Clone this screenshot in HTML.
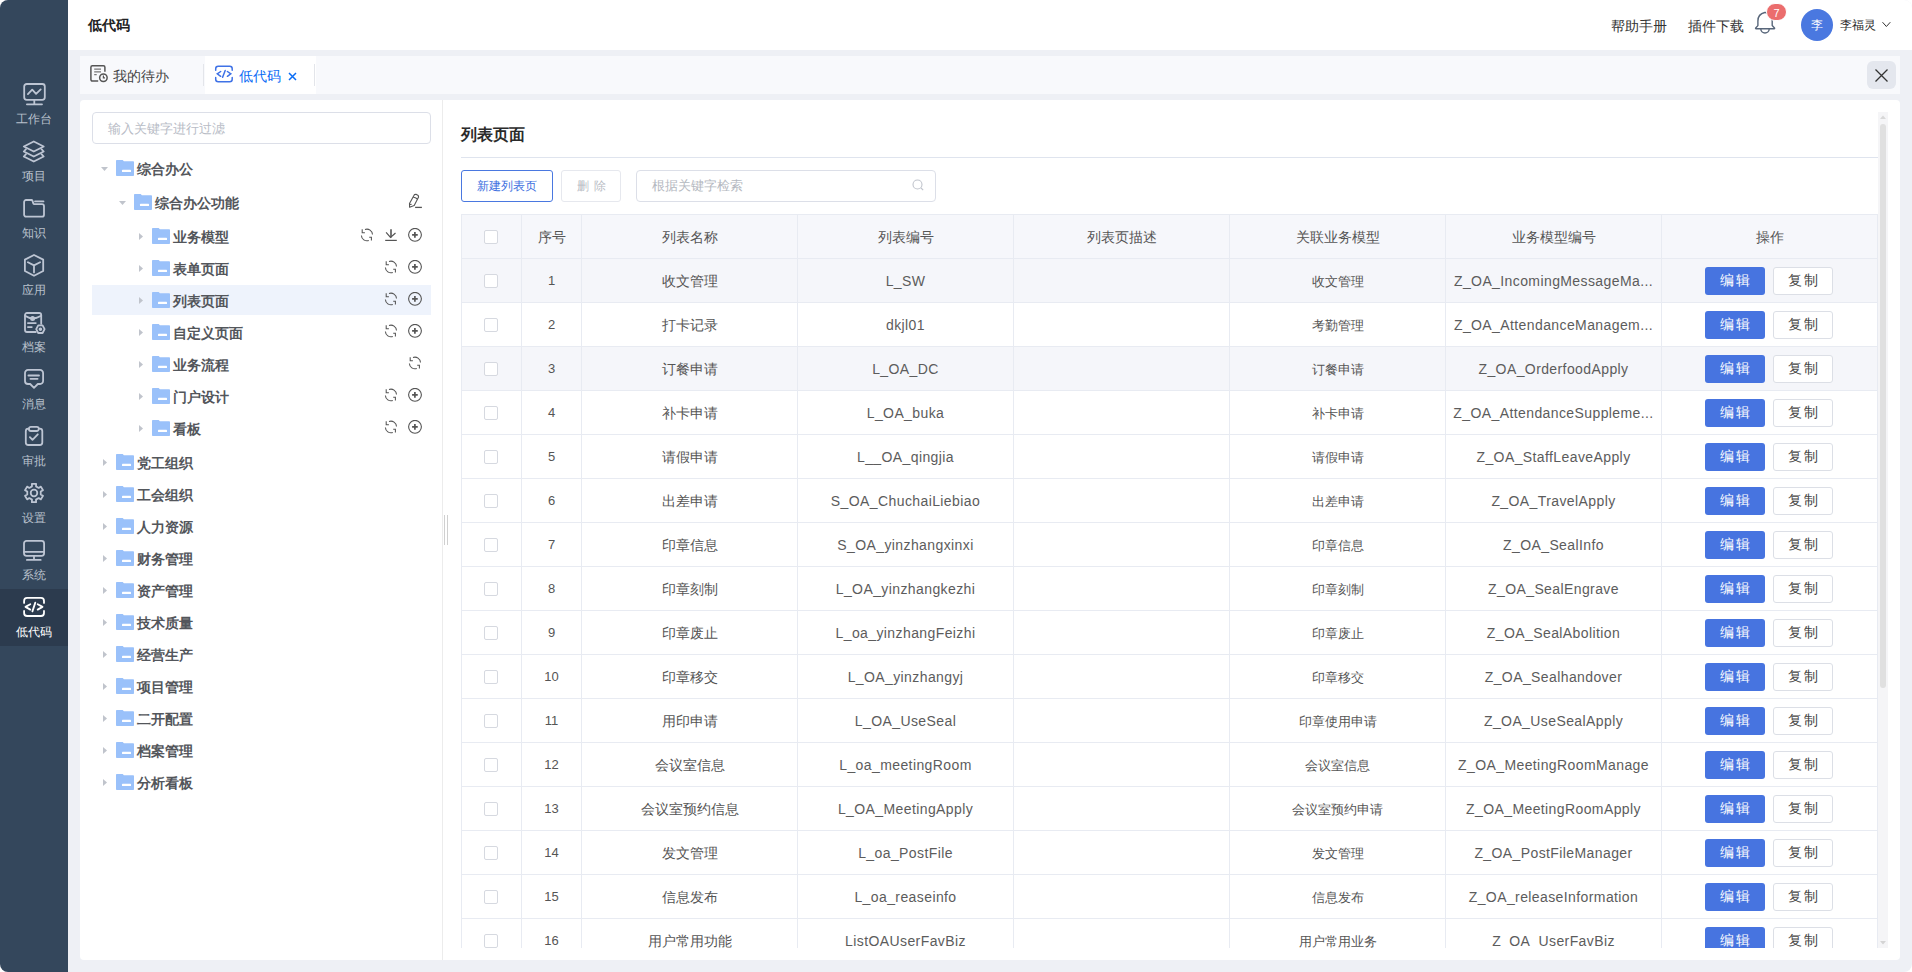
<!DOCTYPE html>
<html><head><meta charset="utf-8">
<style>
*{box-sizing:border-box;margin:0;padding:0}
html,body{width:1912px;height:972px;overflow:hidden;background:#fff;font-family:"Liberation Sans",sans-serif;color:#333}
.abs{position:absolute}
#win{position:absolute;left:0;top:0;width:1912px;height:972px;background:#eef0f5;border-radius:8px;overflow:hidden}
#side{position:absolute;left:0;top:0;width:68px;height:972px;background:#34475c}
.si{position:absolute;left:0;width:68px;height:57px;text-align:center;color:#b9c1cc;font-size:12px}
.si svg{position:absolute;left:22px;top:7px;width:24px;height:24px}
.si span{position:absolute;left:0;width:68px;top:36px;line-height:14px;text-align:center}
.si.act{background:#2c3b4e;color:#fff}
#hdr{position:absolute;left:68px;top:0;width:1844px;height:50px;background:#fff}
.tt{position:absolute;white-space:nowrap;line-height:1}
#tabs{position:absolute;left:80px;top:56px;width:1820px;height:38px;background:#f8f9fc}
#lp{position:absolute;left:80px;top:100px;width:363px;height:860px;background:#fff;border-radius:4px 0 0 4px}
#rp{position:absolute;left:443px;top:100px;width:1457px;height:860px;background:#fff;border-radius:0 4px 4px 0}
#tw{position:absolute;left:461px;top:214px;width:1417px;height:734px;overflow:hidden}
table{border-collapse:collapse;table-layout:fixed;width:1417px}
td,th{border:1px solid #e8ebf2;height:44px;text-align:center;font-weight:normal;font-size:14px;color:#555;white-space:nowrap;overflow:hidden;padding:0}
th{padding-top:2px}
td.zh{padding-top:2px}
td.la{letter-spacing:0.4px;color:#5c5c5c}
td.sm{font-size:12.5px;padding-top:3px}
th .cb{top:-2px}
th{background:#f6f7fb;color:#555}
tr.g td{background:#f5f6fa}
.cb{display:inline-block;position:relative;left:-1px;top:-1px;width:14px;height:14px;border:1px solid #d6d9e0;border-radius:2px;background:#fff;vertical-align:middle}
.be{display:inline-block;margin-left:-1px;width:60px;height:28px;line-height:28px;background:#4774e0;color:#fff;border-radius:3px;font-size:13.5px;letter-spacing:2.5px;text-indent:2.5px;vertical-align:middle}
.bc{display:inline-block;width:60px;height:28px;line-height:26px;background:#fff;border:1px solid #dcdfe6;color:#444;border-radius:3px;font-size:13.5px;letter-spacing:2.5px;text-indent:2.5px;vertical-align:middle;margin-left:8px}
.tn{position:absolute;height:32px;white-space:nowrap}
.tn .ct{position:absolute;top:0}
.tn .txt{position:absolute;font-size:14px;font-weight:bold;color:#4b4b4b;line-height:16px}
</style></head><body><div id="win">

<div id="side">
<div class="si" style="top:76px"><svg viewBox="0 0 24 24" fill="none" stroke="#bdc5d3" stroke-width="1.8" stroke-linecap="round" stroke-linejoin="round" style="color:#bdc5d3"><rect x="2.2" y="1" width="20.6" height="15.8" rx="2.5"/><path d="M5.9 11.1L10.2 6.6l3.9 4.2 4.6-4.4M12.3 17v4M4.9 21.3h15.1"/></svg><span>工作台</span></div>
<div class="si" style="top:133px"><svg viewBox="0 0 24 24" fill="none" stroke="#bdc5d3" stroke-width="1.8" stroke-linecap="round" stroke-linejoin="round" style="color:#bdc5d3"><path d="M11.8 1.5L21.7 6.5 11.8 11.5 1.8 6.5z"/><path d="M4 9.2L1.8 11.5 11.8 16.5 21.7 11.5 19.5 9.2"/><path d="M4 14.2L1.8 16.5 11.8 21.5 21.7 16.5 19.5 14.2"/></svg><span>项目</span></div>
<div class="si" style="top:190px"><svg viewBox="0 0 24 24" fill="none" stroke="#bdc5d3" stroke-width="1.8" stroke-linecap="round" stroke-linejoin="round" style="color:#bdc5d3"><path d="M2.1 5a2 2 0 0 1 2-2h5.4a1 1 0 0 1 .9.6l1 3a1 1 0 0 0 .9.6H20a2 2 0 0 1 2 2v8.5a2 2 0 0 1-2 2H4.1a2 2 0 0 1-2-2z"/><path d="M13 4.4h8.5"/></svg><span>知识</span></div>
<div class="si" style="top:247px"><svg viewBox="0 0 24 24" fill="none" stroke="#bdc5d3" stroke-width="1.8" stroke-linecap="round" stroke-linejoin="round" style="color:#bdc5d3"><path d="M12 1L21.2 5.6v11.4L12 21.8 2.9 17V5.6z"/><path d="M5.9 8.3L12 11.4l6.1-3.1M12 11.4v7"/></svg><span>应用</span></div>
<div class="si" style="top:304px"><svg viewBox="0 0 24 24" fill="none" stroke="#bdc5d3" stroke-width="1.8" stroke-linecap="round" stroke-linejoin="round" style="color:#bdc5d3"><path d="M3 13V4a2 2 0 0 1 2-2h12.2a2 2 0 0 1 2 2v8.8M3 13v6a2 2 0 0 0 2 2h8.8"/><path d="M3 4.8Q10.6 10 19.2 4.8"/><circle cx="10.6" cy="7.4" r="1.6" fill="currentColor"/><path d="M5.9 12.1h7.9M5.9 16.1h3.9"/><path d="M14.2 18.2l2-3.8h4.4l2 3.8-2 3.8h-4.4z"/><circle cx="18.4" cy="18.2" r="0.9" fill="currentColor"/></svg><span>档案</span></div>
<div class="si" style="top:361px"><svg viewBox="0 0 24 24" fill="none" stroke="#bdc5d3" stroke-width="1.8" stroke-linecap="round" stroke-linejoin="round" style="color:#bdc5d3"><path d="M6 1.9h12.1a3 3 0 0 1 3 3V13a3 3 0 0 1-3 3h-2.3L12 19.8 8.2 16H6a3 3 0 0 1-3-3V4.9a3 3 0 0 1 3-3z"/><path d="M6.4 7.5h10.6M8.4 10.8h7.2"/></svg><span>消息</span></div>
<div class="si" style="top:418px"><svg viewBox="0 0 24 24" fill="none" stroke="#bdc5d3" stroke-width="1.8" stroke-linecap="round" stroke-linejoin="round" style="color:#bdc5d3"><path d="M6.9 3.6H6.3a2.5 2.5 0 0 0-2.5 2.5v11.4a2.5 2.5 0 0 0 2.5 2.5h11.5a2.5 2.5 0 0 0 2.5-2.5V6.1a2.5 2.5 0 0 0-2.5-2.5h-.9"/><rect x="6.9" y="1.8" width="9.9" height="4.2" rx="2"/><path d="M7.9 12.1l2.6 2.8 5.3-5.6"/></svg><span>审批</span></div>
<div class="si" style="top:475px"><svg viewBox="0 0 24 24" fill="none" stroke="#bdc5d3" stroke-width="1.8" stroke-linecap="round" stroke-linejoin="round" style="color:#bdc5d3"><path d="M14.02 4.40 L14.11 1.84 L9.89 1.84 L9.98 4.40 L7.29 5.95 L5.13 4.59 L3.01 8.25 L5.28 9.45 L5.28 12.55 L3.01 13.75 L5.13 17.41 L7.29 16.05 L9.98 17.60 L9.89 20.16 L14.11 20.16 L14.02 17.60 L16.71 16.05 L18.87 17.41 L20.99 13.75 L18.72 12.55 L18.72 9.45 L20.99 8.25 L18.87 4.59 L16.71 5.95z"/><circle cx="12" cy="11" r="3.3"/></svg><span>设置</span></div>
<div class="si" style="top:532px"><svg viewBox="0 0 24 24" fill="none" stroke="#bdc5d3" stroke-width="1.8" stroke-linecap="round" stroke-linejoin="round" style="color:#bdc5d3"><rect x="2" y="1.9" width="20.1" height="14.9" rx="2.5"/><path d="M2 12.8h20.1M12 16.8v4M4.9 20.9h13.8"/></svg><span>系统</span></div>
<div class="si act" style="top:589px"><svg viewBox="0 0 24 24" fill="none" stroke="#fff" stroke-width="1.8" stroke-linecap="round" stroke-linejoin="round" style="color:#fff"><path d="M2.1 6.9V4.9a3 3 0 0 1 3-3H19a3 3 0 0 1 3 3v2M2.1 14.9V17a3 3 0 0 0 3 3H19a3 3 0 0 0 3-3v-2.1"/><path d="M8.3 8.3L3.5 10.9l4.8 2.7M15.7 8.3l4.8 2.6-4.8 2.7M13.3 6.6l-2.9 8.8"/></svg><span>低代码</span></div>
</div>
<div id="hdr"></div>
<div class="tt" style="left:88px;top:18px;font-size:14px;font-weight:bold;color:#222">低代码</div>
<div class="tt" style="left:1611px;top:19px;font-size:14px;color:#333">帮助手册</div>
<div class="tt" style="left:1688px;top:19px;font-size:14px;color:#333">插件下载</div>
<svg class="abs" style="left:1748px;top:0px" width="48" height="48" viewBox="0 0 48 48" fill="none" stroke="#58667a" stroke-width="1.4" stroke-linejoin="round"><path d="M16.8 12.5C12.6 13.4 9.9 16.8 9.9 21v4.6l-2.2 2.4c-.3.4-.1.7.3.7h18.2c.4 0 .6-.3.3-.7l-2.3-2.4V21c0-4.2-2.7-7.6-6.9-8.5z"/><path d="M12.8 28.8a4.2 4.2 0 0 0 8.4 0"/></svg>
<div class="abs" style="left:1766px;top:3px;width:21px;height:18px;border-radius:10px;background:#eb6d6d;border:1.5px solid #fff;color:#fff;font-size:11px;line-height:19px;text-align:center">7</div>
<div class="abs" style="left:1801px;top:9px;width:32px;height:32px;border-radius:50%;background:#4a78e0;color:#fff;font-size:12px;line-height:32px;text-align:center">李</div>
<div class="tt" style="left:1840px;top:19px;font-size:12px;color:#2a2a2a">李福灵</div>
<svg class="abs" style="left:1882px;top:21px" width="9" height="7" viewBox="0 0 9 7" fill="none" stroke="#333" stroke-width="1"><path d="M.5 1.2l3.9 4.3 3.9-4.3"/></svg>
<div id="tabs"></div>
<div class="abs" style="left:205px;top:56px;width:111px;height:38px;background:#fff"></div>
<div class="abs" style="left:203px;top:64px;width:1px;height:22px;background:#e3e5ea"></div>
<div class="abs" style="left:314px;top:64px;width:1px;height:22px;background:#e3e5ea"></div>
<svg class="abs" style="left:84px;top:60px" width="32" height="32" viewBox="0 0 32 32" fill="none" stroke="#555" stroke-width="1.5"><path d="M14.2 21.1H8.4a1.5 1.5 0 0 1-1.5-1.5V7.2a1.5 1.5 0 0 1 1.5-1.5h11a1.5 1.5 0 0 1 1.5 1.5v4.5"/><path d="M10.2 9.2h6.8M10.2 11.9h6.8M10.2 14.65h2.5" stroke="#777" stroke-width="1.3"/><circle cx="19.4" cy="17.8" r="3.75"/><path d="M19.4 15.4v2.4h1.6" stroke-width="1.2"/></svg>
<div class="tt" style="left:113px;top:69px;font-size:14px;color:#444">我的待办</div>
<svg class="abs" style="left:208px;top:58px" width="32" height="32" viewBox="0 0 32 32" fill="none" stroke="#3f72e6" stroke-width="1.5" stroke-linecap="round"><path d="M7.7 12.3V10.7a2.5 2.5 0 0 1 2.5-2.5h11.5a2.5 2.5 0 0 1 2.5 2.5v1.6M7.7 19.5v1.8a2.5 2.5 0 0 0 2.5 2.5h11.5a2.5 2.5 0 0 0 2.5-2.5v-1.8"/><path d="M12.7 13.5L9.3 15.8l3.4 2.5M19.4 13.5l3.4 2.3-3.4 2.5M17.2 12.5l-2.6 6.8"/></svg>
<div class="tt" style="left:239px;top:69px;font-size:14px;color:#0a6cf5">低代码</div>
<svg class="abs" style="left:288px;top:72px" width="9" height="9" viewBox="0 0 9 9" stroke="#0a6cf5" stroke-width="1.5"><path d="M1 1l7 7M8 1l-7 7"/></svg>
<div class="abs" style="left:1867px;top:61px;width:29px;height:28px;border-radius:6px;background:#e4e7ee"></div>
<svg class="abs" style="left:1875px;top:69px" width="13" height="13" viewBox="0 0 13 13" stroke="#333" stroke-width="1.3"><path d="M.5 .5l12 12M12.5 .5l-12 12"/></svg>
<div id="lp"></div>
<div class="abs" style="left:442px;top:100px;width:1px;height:860px;background:#ececec"></div>
<div class="abs" style="left:92px;top:112px;width:339px;height:32px;border:1px solid #dcdfe8;border-radius:4px"></div>
<div class="tt" style="left:108px;top:122px;font-size:13px;color:#b8bcc6">输入关键字进行过滤</div>
<div class="abs" style="left:92px;top:285px;width:339px;height:30px;background:#eef3fc"></div>
<svg class="abs" style="left:101px;top:167px" width="7" height="4" viewBox="0 0 7 4"><path d="M0 0h7L3.5 4z" fill="#c0c4cc"/></svg>
<div class="abs" style="left:116px;top:160px;width:18px;height:16px"><svg width="18" height="16" viewBox="0 0 18 16"><path d="M0 .8a.8.8 0 0 1 .8-.8h5.9l1.2 1.3h9.3a.8.8 0 0 1 .8.8v13.1a.8.8 0 0 1-.8.8H.8a.8.8 0 0 1-.8-.8z" fill="#9ac1fa"/><rect x="6" y="9.8" width="9" height="2.2" rx="0.6" fill="#fff"/></svg></div>
<div class="tt" style="left:137px;top:162px;font-size:14px;font-weight:bold;color:#53565b">综合办公</div>
<svg class="abs" style="left:119px;top:201px" width="7" height="4" viewBox="0 0 7 4"><path d="M0 0h7L3.5 4z" fill="#c0c4cc"/></svg>
<div class="abs" style="left:134px;top:194px;width:18px;height:16px"><svg width="18" height="16" viewBox="0 0 18 16"><path d="M0 .8a.8.8 0 0 1 .8-.8h5.9l1.2 1.3h9.3a.8.8 0 0 1 .8.8v13.1a.8.8 0 0 1-.8.8H.8a.8.8 0 0 1-.8-.8z" fill="#9ac1fa"/><rect x="6" y="9.8" width="9" height="2.2" rx="0.6" fill="#fff"/></svg></div>
<div class="tt" style="left:155px;top:196px;font-size:14px;font-weight:bold;color:#53565b">综合办公功能</div>
<div class="abs" style="left:404px;top:190px;line-height:0"><svg width="22" height="22" viewBox="0 0 22 22" fill="none" stroke="#555" stroke-width="1.1" stroke-linejoin="round"><path d="M5.5 13.6L10.5 4.6L12 4.2L14.2 5.5L14.6 7L10.2 15.4L5.6 17.3z"/><path d="M9.2 7.3Q11.5 7.3 13.4 9"/><path d="M5.7 14.4h1.9"/><path d="M11.1 17.4h6.8" stroke-width="1.3"/></svg></div>
<svg class="abs" style="left:139px;top:233px" width="4" height="7" viewBox="0 0 4 7"><path d="M0 0v7L4 3.5z" fill="#c0c4cc"/></svg>
<div class="abs" style="left:152px;top:228px;width:18px;height:16px"><svg width="18" height="16" viewBox="0 0 18 16"><path d="M0 .8a.8.8 0 0 1 .8-.8h5.9l1.2 1.3h9.3a.8.8 0 0 1 .8.8v13.1a.8.8 0 0 1-.8.8H.8a.8.8 0 0 1-.8-.8z" fill="#9ac1fa"/><rect x="6" y="9.8" width="9" height="2.2" rx="0.6" fill="#fff"/></svg></div>
<div class="tt" style="left:173px;top:230px;font-size:14px;font-weight:bold;color:#53565b">业务模型</div>
<div class="abs" style="left:359px;top:228px;line-height:0"><svg width="16" height="16" viewBox="0 0 16 16" fill="none" stroke="#555" stroke-width="1.05"><path d="M3.2 1.3v3.4h2.7"/><path d="M6 1.5A5.6 5.6 0 0 1 13.5 6.6"/><path d="M2.4 7.4A5.6 5.6 0 0 0 9.8 12.5"/><path d="M10.2 9.2h2.2v3.4"/></svg></div>
<div class="abs" style="left:383px;top:228px;line-height:0"><svg width="16" height="16" viewBox="0 0 16 16" fill="none" stroke="#555" stroke-width="1.2"><path d="M8 1.3v8.3" stroke-width="1.6"/><path d="M3.1 4.3l4.4 5.1 5-4.4"/><path d="M2.2 12.4h11.6"/></svg></div>
<div class="abs" style="left:407px;top:228px;line-height:0"><svg width="16" height="16" viewBox="0 0 16 16" fill="none" stroke="#555" stroke-width="1.1"><circle cx="8" cy="6.8" r="6.4"/><path d="M5.1 6.9h5.65M7.9 4.1v5.6" stroke-width="1.7"/></svg></div>
<svg class="abs" style="left:139px;top:265px" width="4" height="7" viewBox="0 0 4 7"><path d="M0 0v7L4 3.5z" fill="#c0c4cc"/></svg>
<div class="abs" style="left:152px;top:260px;width:18px;height:16px"><svg width="18" height="16" viewBox="0 0 18 16"><path d="M0 .8a.8.8 0 0 1 .8-.8h5.9l1.2 1.3h9.3a.8.8 0 0 1 .8.8v13.1a.8.8 0 0 1-.8.8H.8a.8.8 0 0 1-.8-.8z" fill="#9ac1fa"/><rect x="6" y="9.8" width="9" height="2.2" rx="0.6" fill="#fff"/></svg></div>
<div class="tt" style="left:173px;top:262px;font-size:14px;font-weight:bold;color:#53565b">表单页面</div>
<div class="abs" style="left:383px;top:260px;line-height:0"><svg width="16" height="16" viewBox="0 0 16 16" fill="none" stroke="#555" stroke-width="1.05"><path d="M3.2 1.3v3.4h2.7"/><path d="M6 1.5A5.6 5.6 0 0 1 13.5 6.6"/><path d="M2.4 7.4A5.6 5.6 0 0 0 9.8 12.5"/><path d="M10.2 9.2h2.2v3.4"/></svg></div>
<div class="abs" style="left:407px;top:260px;line-height:0"><svg width="16" height="16" viewBox="0 0 16 16" fill="none" stroke="#555" stroke-width="1.1"><circle cx="8" cy="6.8" r="6.4"/><path d="M5.1 6.9h5.65M7.9 4.1v5.6" stroke-width="1.7"/></svg></div>
<svg class="abs" style="left:139px;top:297px" width="4" height="7" viewBox="0 0 4 7"><path d="M0 0v7L4 3.5z" fill="#c0c4cc"/></svg>
<div class="abs" style="left:152px;top:292px;width:18px;height:16px"><svg width="18" height="16" viewBox="0 0 18 16"><path d="M0 .8a.8.8 0 0 1 .8-.8h5.9l1.2 1.3h9.3a.8.8 0 0 1 .8.8v13.1a.8.8 0 0 1-.8.8H.8a.8.8 0 0 1-.8-.8z" fill="#9ac1fa"/><rect x="6" y="9.8" width="9" height="2.2" rx="0.6" fill="#fff"/></svg></div>
<div class="tt" style="left:173px;top:294px;font-size:14px;font-weight:bold;color:#53565b">列表页面</div>
<div class="abs" style="left:383px;top:292px;line-height:0"><svg width="16" height="16" viewBox="0 0 16 16" fill="none" stroke="#555" stroke-width="1.05"><path d="M3.2 1.3v3.4h2.7"/><path d="M6 1.5A5.6 5.6 0 0 1 13.5 6.6"/><path d="M2.4 7.4A5.6 5.6 0 0 0 9.8 12.5"/><path d="M10.2 9.2h2.2v3.4"/></svg></div>
<div class="abs" style="left:407px;top:292px;line-height:0"><svg width="16" height="16" viewBox="0 0 16 16" fill="none" stroke="#555" stroke-width="1.1"><circle cx="8" cy="6.8" r="6.4"/><path d="M5.1 6.9h5.65M7.9 4.1v5.6" stroke-width="1.7"/></svg></div>
<svg class="abs" style="left:139px;top:329px" width="4" height="7" viewBox="0 0 4 7"><path d="M0 0v7L4 3.5z" fill="#c0c4cc"/></svg>
<div class="abs" style="left:152px;top:324px;width:18px;height:16px"><svg width="18" height="16" viewBox="0 0 18 16"><path d="M0 .8a.8.8 0 0 1 .8-.8h5.9l1.2 1.3h9.3a.8.8 0 0 1 .8.8v13.1a.8.8 0 0 1-.8.8H.8a.8.8 0 0 1-.8-.8z" fill="#9ac1fa"/><rect x="6" y="9.8" width="9" height="2.2" rx="0.6" fill="#fff"/></svg></div>
<div class="tt" style="left:173px;top:326px;font-size:14px;font-weight:bold;color:#53565b">自定义页面</div>
<div class="abs" style="left:383px;top:324px;line-height:0"><svg width="16" height="16" viewBox="0 0 16 16" fill="none" stroke="#555" stroke-width="1.05"><path d="M3.2 1.3v3.4h2.7"/><path d="M6 1.5A5.6 5.6 0 0 1 13.5 6.6"/><path d="M2.4 7.4A5.6 5.6 0 0 0 9.8 12.5"/><path d="M10.2 9.2h2.2v3.4"/></svg></div>
<div class="abs" style="left:407px;top:324px;line-height:0"><svg width="16" height="16" viewBox="0 0 16 16" fill="none" stroke="#555" stroke-width="1.1"><circle cx="8" cy="6.8" r="6.4"/><path d="M5.1 6.9h5.65M7.9 4.1v5.6" stroke-width="1.7"/></svg></div>
<svg class="abs" style="left:139px;top:361px" width="4" height="7" viewBox="0 0 4 7"><path d="M0 0v7L4 3.5z" fill="#c0c4cc"/></svg>
<div class="abs" style="left:152px;top:356px;width:18px;height:16px"><svg width="18" height="16" viewBox="0 0 18 16"><path d="M0 .8a.8.8 0 0 1 .8-.8h5.9l1.2 1.3h9.3a.8.8 0 0 1 .8.8v13.1a.8.8 0 0 1-.8.8H.8a.8.8 0 0 1-.8-.8z" fill="#9ac1fa"/><rect x="6" y="9.8" width="9" height="2.2" rx="0.6" fill="#fff"/></svg></div>
<div class="tt" style="left:173px;top:358px;font-size:14px;font-weight:bold;color:#53565b">业务流程</div>
<div class="abs" style="left:407px;top:356px;line-height:0"><svg width="16" height="16" viewBox="0 0 16 16" fill="none" stroke="#555" stroke-width="1.05"><path d="M3.2 1.3v3.4h2.7"/><path d="M6 1.5A5.6 5.6 0 0 1 13.5 6.6"/><path d="M2.4 7.4A5.6 5.6 0 0 0 9.8 12.5"/><path d="M10.2 9.2h2.2v3.4"/></svg></div>
<svg class="abs" style="left:139px;top:393px" width="4" height="7" viewBox="0 0 4 7"><path d="M0 0v7L4 3.5z" fill="#c0c4cc"/></svg>
<div class="abs" style="left:152px;top:388px;width:18px;height:16px"><svg width="18" height="16" viewBox="0 0 18 16"><path d="M0 .8a.8.8 0 0 1 .8-.8h5.9l1.2 1.3h9.3a.8.8 0 0 1 .8.8v13.1a.8.8 0 0 1-.8.8H.8a.8.8 0 0 1-.8-.8z" fill="#9ac1fa"/><rect x="6" y="9.8" width="9" height="2.2" rx="0.6" fill="#fff"/></svg></div>
<div class="tt" style="left:173px;top:390px;font-size:14px;font-weight:bold;color:#53565b">门户设计</div>
<div class="abs" style="left:383px;top:388px;line-height:0"><svg width="16" height="16" viewBox="0 0 16 16" fill="none" stroke="#555" stroke-width="1.05"><path d="M3.2 1.3v3.4h2.7"/><path d="M6 1.5A5.6 5.6 0 0 1 13.5 6.6"/><path d="M2.4 7.4A5.6 5.6 0 0 0 9.8 12.5"/><path d="M10.2 9.2h2.2v3.4"/></svg></div>
<div class="abs" style="left:407px;top:388px;line-height:0"><svg width="16" height="16" viewBox="0 0 16 16" fill="none" stroke="#555" stroke-width="1.1"><circle cx="8" cy="6.8" r="6.4"/><path d="M5.1 6.9h5.65M7.9 4.1v5.6" stroke-width="1.7"/></svg></div>
<svg class="abs" style="left:139px;top:425px" width="4" height="7" viewBox="0 0 4 7"><path d="M0 0v7L4 3.5z" fill="#c0c4cc"/></svg>
<div class="abs" style="left:152px;top:420px;width:18px;height:16px"><svg width="18" height="16" viewBox="0 0 18 16"><path d="M0 .8a.8.8 0 0 1 .8-.8h5.9l1.2 1.3h9.3a.8.8 0 0 1 .8.8v13.1a.8.8 0 0 1-.8.8H.8a.8.8 0 0 1-.8-.8z" fill="#9ac1fa"/><rect x="6" y="9.8" width="9" height="2.2" rx="0.6" fill="#fff"/></svg></div>
<div class="tt" style="left:173px;top:422px;font-size:14px;font-weight:bold;color:#53565b">看板</div>
<div class="abs" style="left:383px;top:420px;line-height:0"><svg width="16" height="16" viewBox="0 0 16 16" fill="none" stroke="#555" stroke-width="1.05"><path d="M3.2 1.3v3.4h2.7"/><path d="M6 1.5A5.6 5.6 0 0 1 13.5 6.6"/><path d="M2.4 7.4A5.6 5.6 0 0 0 9.8 12.5"/><path d="M10.2 9.2h2.2v3.4"/></svg></div>
<div class="abs" style="left:407px;top:420px;line-height:0"><svg width="16" height="16" viewBox="0 0 16 16" fill="none" stroke="#555" stroke-width="1.1"><circle cx="8" cy="6.8" r="6.4"/><path d="M5.1 6.9h5.65M7.9 4.1v5.6" stroke-width="1.7"/></svg></div>
<svg class="abs" style="left:103px;top:459px" width="4" height="7" viewBox="0 0 4 7"><path d="M0 0v7L4 3.5z" fill="#c0c4cc"/></svg>
<div class="abs" style="left:116px;top:454px;width:18px;height:16px"><svg width="18" height="16" viewBox="0 0 18 16"><path d="M0 .8a.8.8 0 0 1 .8-.8h5.9l1.2 1.3h9.3a.8.8 0 0 1 .8.8v13.1a.8.8 0 0 1-.8.8H.8a.8.8 0 0 1-.8-.8z" fill="#9ac1fa"/><rect x="6" y="9.8" width="9" height="2.2" rx="0.6" fill="#fff"/></svg></div>
<div class="tt" style="left:137px;top:456px;font-size:14px;font-weight:bold;color:#53565b">党工组织</div>
<svg class="abs" style="left:103px;top:491px" width="4" height="7" viewBox="0 0 4 7"><path d="M0 0v7L4 3.5z" fill="#c0c4cc"/></svg>
<div class="abs" style="left:116px;top:486px;width:18px;height:16px"><svg width="18" height="16" viewBox="0 0 18 16"><path d="M0 .8a.8.8 0 0 1 .8-.8h5.9l1.2 1.3h9.3a.8.8 0 0 1 .8.8v13.1a.8.8 0 0 1-.8.8H.8a.8.8 0 0 1-.8-.8z" fill="#9ac1fa"/><rect x="6" y="9.8" width="9" height="2.2" rx="0.6" fill="#fff"/></svg></div>
<div class="tt" style="left:137px;top:488px;font-size:14px;font-weight:bold;color:#53565b">工会组织</div>
<svg class="abs" style="left:103px;top:523px" width="4" height="7" viewBox="0 0 4 7"><path d="M0 0v7L4 3.5z" fill="#c0c4cc"/></svg>
<div class="abs" style="left:116px;top:518px;width:18px;height:16px"><svg width="18" height="16" viewBox="0 0 18 16"><path d="M0 .8a.8.8 0 0 1 .8-.8h5.9l1.2 1.3h9.3a.8.8 0 0 1 .8.8v13.1a.8.8 0 0 1-.8.8H.8a.8.8 0 0 1-.8-.8z" fill="#9ac1fa"/><rect x="6" y="9.8" width="9" height="2.2" rx="0.6" fill="#fff"/></svg></div>
<div class="tt" style="left:137px;top:520px;font-size:14px;font-weight:bold;color:#53565b">人力资源</div>
<svg class="abs" style="left:103px;top:555px" width="4" height="7" viewBox="0 0 4 7"><path d="M0 0v7L4 3.5z" fill="#c0c4cc"/></svg>
<div class="abs" style="left:116px;top:550px;width:18px;height:16px"><svg width="18" height="16" viewBox="0 0 18 16"><path d="M0 .8a.8.8 0 0 1 .8-.8h5.9l1.2 1.3h9.3a.8.8 0 0 1 .8.8v13.1a.8.8 0 0 1-.8.8H.8a.8.8 0 0 1-.8-.8z" fill="#9ac1fa"/><rect x="6" y="9.8" width="9" height="2.2" rx="0.6" fill="#fff"/></svg></div>
<div class="tt" style="left:137px;top:552px;font-size:14px;font-weight:bold;color:#53565b">财务管理</div>
<svg class="abs" style="left:103px;top:587px" width="4" height="7" viewBox="0 0 4 7"><path d="M0 0v7L4 3.5z" fill="#c0c4cc"/></svg>
<div class="abs" style="left:116px;top:582px;width:18px;height:16px"><svg width="18" height="16" viewBox="0 0 18 16"><path d="M0 .8a.8.8 0 0 1 .8-.8h5.9l1.2 1.3h9.3a.8.8 0 0 1 .8.8v13.1a.8.8 0 0 1-.8.8H.8a.8.8 0 0 1-.8-.8z" fill="#9ac1fa"/><rect x="6" y="9.8" width="9" height="2.2" rx="0.6" fill="#fff"/></svg></div>
<div class="tt" style="left:137px;top:584px;font-size:14px;font-weight:bold;color:#53565b">资产管理</div>
<svg class="abs" style="left:103px;top:619px" width="4" height="7" viewBox="0 0 4 7"><path d="M0 0v7L4 3.5z" fill="#c0c4cc"/></svg>
<div class="abs" style="left:116px;top:614px;width:18px;height:16px"><svg width="18" height="16" viewBox="0 0 18 16"><path d="M0 .8a.8.8 0 0 1 .8-.8h5.9l1.2 1.3h9.3a.8.8 0 0 1 .8.8v13.1a.8.8 0 0 1-.8.8H.8a.8.8 0 0 1-.8-.8z" fill="#9ac1fa"/><rect x="6" y="9.8" width="9" height="2.2" rx="0.6" fill="#fff"/></svg></div>
<div class="tt" style="left:137px;top:616px;font-size:14px;font-weight:bold;color:#53565b">技术质量</div>
<svg class="abs" style="left:103px;top:651px" width="4" height="7" viewBox="0 0 4 7"><path d="M0 0v7L4 3.5z" fill="#c0c4cc"/></svg>
<div class="abs" style="left:116px;top:646px;width:18px;height:16px"><svg width="18" height="16" viewBox="0 0 18 16"><path d="M0 .8a.8.8 0 0 1 .8-.8h5.9l1.2 1.3h9.3a.8.8 0 0 1 .8.8v13.1a.8.8 0 0 1-.8.8H.8a.8.8 0 0 1-.8-.8z" fill="#9ac1fa"/><rect x="6" y="9.8" width="9" height="2.2" rx="0.6" fill="#fff"/></svg></div>
<div class="tt" style="left:137px;top:648px;font-size:14px;font-weight:bold;color:#53565b">经营生产</div>
<svg class="abs" style="left:103px;top:683px" width="4" height="7" viewBox="0 0 4 7"><path d="M0 0v7L4 3.5z" fill="#c0c4cc"/></svg>
<div class="abs" style="left:116px;top:678px;width:18px;height:16px"><svg width="18" height="16" viewBox="0 0 18 16"><path d="M0 .8a.8.8 0 0 1 .8-.8h5.9l1.2 1.3h9.3a.8.8 0 0 1 .8.8v13.1a.8.8 0 0 1-.8.8H.8a.8.8 0 0 1-.8-.8z" fill="#9ac1fa"/><rect x="6" y="9.8" width="9" height="2.2" rx="0.6" fill="#fff"/></svg></div>
<div class="tt" style="left:137px;top:680px;font-size:14px;font-weight:bold;color:#53565b">项目管理</div>
<svg class="abs" style="left:103px;top:715px" width="4" height="7" viewBox="0 0 4 7"><path d="M0 0v7L4 3.5z" fill="#c0c4cc"/></svg>
<div class="abs" style="left:116px;top:710px;width:18px;height:16px"><svg width="18" height="16" viewBox="0 0 18 16"><path d="M0 .8a.8.8 0 0 1 .8-.8h5.9l1.2 1.3h9.3a.8.8 0 0 1 .8.8v13.1a.8.8 0 0 1-.8.8H.8a.8.8 0 0 1-.8-.8z" fill="#9ac1fa"/><rect x="6" y="9.8" width="9" height="2.2" rx="0.6" fill="#fff"/></svg></div>
<div class="tt" style="left:137px;top:712px;font-size:14px;font-weight:bold;color:#53565b">二开配置</div>
<svg class="abs" style="left:103px;top:747px" width="4" height="7" viewBox="0 0 4 7"><path d="M0 0v7L4 3.5z" fill="#c0c4cc"/></svg>
<div class="abs" style="left:116px;top:742px;width:18px;height:16px"><svg width="18" height="16" viewBox="0 0 18 16"><path d="M0 .8a.8.8 0 0 1 .8-.8h5.9l1.2 1.3h9.3a.8.8 0 0 1 .8.8v13.1a.8.8 0 0 1-.8.8H.8a.8.8 0 0 1-.8-.8z" fill="#9ac1fa"/><rect x="6" y="9.8" width="9" height="2.2" rx="0.6" fill="#fff"/></svg></div>
<div class="tt" style="left:137px;top:744px;font-size:14px;font-weight:bold;color:#53565b">档案管理</div>
<svg class="abs" style="left:103px;top:779px" width="4" height="7" viewBox="0 0 4 7"><path d="M0 0v7L4 3.5z" fill="#c0c4cc"/></svg>
<div class="abs" style="left:116px;top:774px;width:18px;height:16px"><svg width="18" height="16" viewBox="0 0 18 16"><path d="M0 .8a.8.8 0 0 1 .8-.8h5.9l1.2 1.3h9.3a.8.8 0 0 1 .8.8v13.1a.8.8 0 0 1-.8.8H.8a.8.8 0 0 1-.8-.8z" fill="#9ac1fa"/><rect x="6" y="9.8" width="9" height="2.2" rx="0.6" fill="#fff"/></svg></div>
<div class="tt" style="left:137px;top:776px;font-size:14px;font-weight:bold;color:#53565b">分析看板</div>
<div id="rp"></div>
<div class="abs" style="left:444px;top:515px;width:1px;height:30px;background:#d0d0d0"></div>
<div class="abs" style="left:447px;top:515px;width:1px;height:30px;background:#d0d0d0"></div>
<div class="tt" style="left:461px;top:127px;font-size:16px;font-weight:bold;color:#2b2b2b">列表页面</div>
<div class="abs" style="left:461px;top:157px;width:1417px;height:1px;background:#dfe4ee"></div>
<div class="abs" style="left:461px;top:170px;width:92px;height:32px;border:1px solid #4a78e0;border-radius:3px;color:#3d6fe0;font-size:12px;line-height:30px;text-align:center">新建列表页</div>
<div class="abs" style="left:561px;top:170px;width:60px;height:32px;border:1px solid #e6e8ee;border-radius:3px;color:#b8bcc4;font-size:12px;line-height:30px;text-align:center;letter-spacing:5px;text-indent:5px">删除</div>
<div class="abs" style="left:636px;top:170px;width:300px;height:32px;border:1px solid #dcdfe8;border-radius:4px"></div>
<div class="tt" style="left:652px;top:179px;font-size:13px;color:#b4b8c0">根据关键字检索</div>
<svg class="abs" style="left:912px;top:179px" width="12" height="12" viewBox="0 0 12 12" fill="none" stroke="#c0c4cc" stroke-width="1.1"><circle cx="5.5" cy="5.5" r="4.5"/><path d="M9 9l2.2 2.2"/></svg>
<div id="tw"><table><colgroup><col style="width:60px"><col style="width:60px"><col style="width:216px"><col style="width:216px"><col style="width:216px"><col style="width:216px"><col style="width:216px"><col style="width:216px"></colgroup>
<tr><th><span class="cb"></span></th><th>序号</th><th>列表名称</th><th>列表编号</th><th>列表页描述</th><th>关联业务模型</th><th>业务模型编号</th><th>操作</th></tr>
<tr class="g"><td><span class="cb"></span></td><td style="font-size:13px">1</td><td class="zh">收文管理</td><td class="la">L_SW</td><td></td><td class="sm">收文管理</td><td class="la">Z_OA_IncomingMessageMa...</td><td><span class="be">编辑</span><span class="bc">复制</span></td></tr>
<tr><td><span class="cb"></span></td><td style="font-size:13px">2</td><td class="zh">打卡记录</td><td class="la">dkjl01</td><td></td><td class="sm">考勤管理</td><td class="la">Z_OA_AttendanceManagem...</td><td><span class="be">编辑</span><span class="bc">复制</span></td></tr>
<tr class="g"><td><span class="cb"></span></td><td style="font-size:13px">3</td><td class="zh">订餐申请</td><td class="la">L_OA_DC</td><td></td><td class="sm">订餐申请</td><td class="la">Z_OA_OrderfoodApply</td><td><span class="be">编辑</span><span class="bc">复制</span></td></tr>
<tr><td><span class="cb"></span></td><td style="font-size:13px">4</td><td class="zh">补卡申请</td><td class="la">L_OA_buka</td><td></td><td class="sm">补卡申请</td><td class="la">Z_OA_AttendanceSuppleme...</td><td><span class="be">编辑</span><span class="bc">复制</span></td></tr>
<tr><td><span class="cb"></span></td><td style="font-size:13px">5</td><td class="zh">请假申请</td><td class="la">L__OA_qingjia</td><td></td><td class="sm">请假申请</td><td class="la">Z_OA_StaffLeaveApply</td><td><span class="be">编辑</span><span class="bc">复制</span></td></tr>
<tr><td><span class="cb"></span></td><td style="font-size:13px">6</td><td class="zh">出差申请</td><td class="la">S_OA_ChuchaiLiebiao</td><td></td><td class="sm">出差申请</td><td class="la">Z_OA_TravelApply</td><td><span class="be">编辑</span><span class="bc">复制</span></td></tr>
<tr><td><span class="cb"></span></td><td style="font-size:13px">7</td><td class="zh">印章信息</td><td class="la">S_OA_yinzhangxinxi</td><td></td><td class="sm">印章信息</td><td class="la">Z_OA_SealInfo</td><td><span class="be">编辑</span><span class="bc">复制</span></td></tr>
<tr><td><span class="cb"></span></td><td style="font-size:13px">8</td><td class="zh">印章刻制</td><td class="la">L_OA_yinzhangkezhi</td><td></td><td class="sm">印章刻制</td><td class="la">Z_OA_SealEngrave</td><td><span class="be">编辑</span><span class="bc">复制</span></td></tr>
<tr><td><span class="cb"></span></td><td style="font-size:13px">9</td><td class="zh">印章废止</td><td class="la">L_oa_yinzhangFeizhi</td><td></td><td class="sm">印章废止</td><td class="la">Z_OA_SealAbolition</td><td><span class="be">编辑</span><span class="bc">复制</span></td></tr>
<tr><td><span class="cb"></span></td><td style="font-size:13px">10</td><td class="zh">印章移交</td><td class="la">L_OA_yinzhangyj</td><td></td><td class="sm">印章移交</td><td class="la">Z_OA_Sealhandover</td><td><span class="be">编辑</span><span class="bc">复制</span></td></tr>
<tr><td><span class="cb"></span></td><td style="font-size:13px">11</td><td class="zh">用印申请</td><td class="la">L_OA_UseSeal</td><td></td><td class="sm">印章使用申请</td><td class="la">Z_OA_UseSealApply</td><td><span class="be">编辑</span><span class="bc">复制</span></td></tr>
<tr><td><span class="cb"></span></td><td style="font-size:13px">12</td><td class="zh">会议室信息</td><td class="la">L_oa_meetingRoom</td><td></td><td class="sm">会议室信息</td><td class="la">Z_OA_MeetingRoomManage</td><td><span class="be">编辑</span><span class="bc">复制</span></td></tr>
<tr><td><span class="cb"></span></td><td style="font-size:13px">13</td><td class="zh">会议室预约信息</td><td class="la">L_OA_MeetingApply</td><td></td><td class="sm">会议室预约申请</td><td class="la">Z_OA_MeetingRoomApply</td><td><span class="be">编辑</span><span class="bc">复制</span></td></tr>
<tr><td><span class="cb"></span></td><td style="font-size:13px">14</td><td class="zh">发文管理</td><td class="la">L_oa_PostFile</td><td></td><td class="sm">发文管理</td><td class="la">Z_OA_PostFileManager</td><td><span class="be">编辑</span><span class="bc">复制</span></td></tr>
<tr><td><span class="cb"></span></td><td style="font-size:13px">15</td><td class="zh">信息发布</td><td class="la">L_oa_reaseinfo</td><td></td><td class="sm">信息发布</td><td class="la">Z_OA_releaseInformation</td><td><span class="be">编辑</span><span class="bc">复制</span></td></tr>
<tr><td><span class="cb"></span></td><td style="font-size:13px">16</td><td class="zh">用户常用功能</td><td class="la">ListOAUserFavBiz</td><td></td><td class="sm">用户常用业务</td><td class="la">Z_OA_UserFavBiz</td><td><span class="be">编辑</span><span class="bc">复制</span></td></tr>
</table></div>
<div class="abs" style="left:1878px;top:112px;width:10px;height:836px;background:#f5f5f7"></div>
<div class="abs" style="left:1880px;top:124px;width:6px;height:564px;border-radius:3px;background:#e0e0e0"></div>
<svg class="abs" style="left:1880px;top:115px" width="6" height="4" viewBox="0 0 6 4"><path d="M0 4h6L3 .5z" fill="#d8d8d8"/></svg>
<svg class="abs" style="left:1880px;top:941px" width="6" height="4" viewBox="0 0 6 4"><path d="M0 0h6L3 3.5z" fill="#d4d4d4"/></svg>
</div></body></html>
